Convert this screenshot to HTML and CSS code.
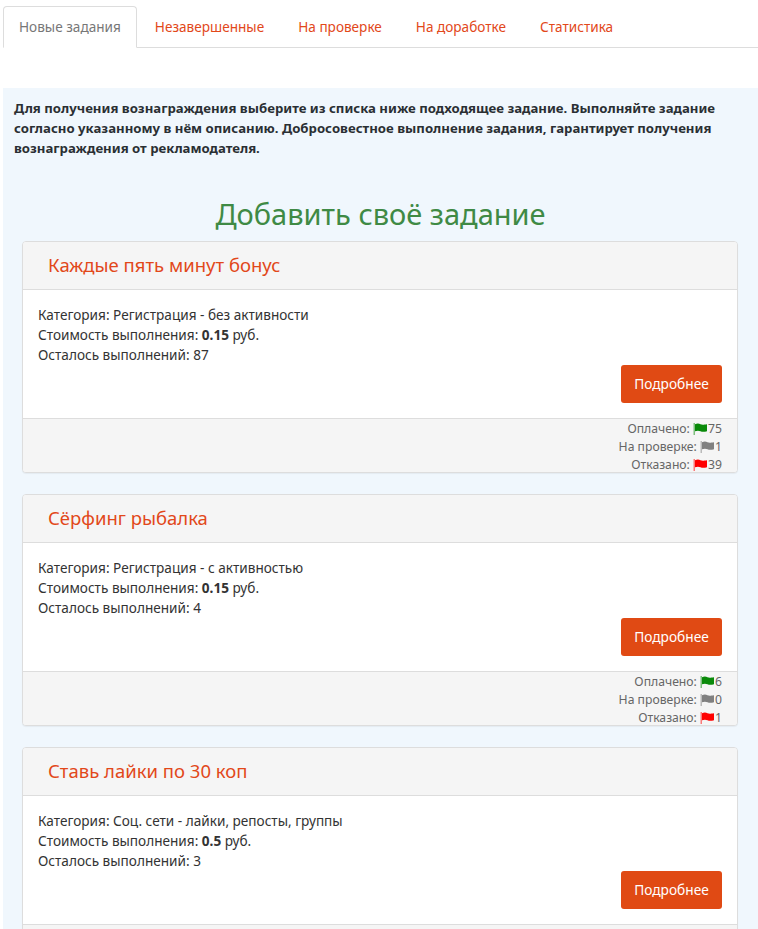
FILE: index.html
```html
<!DOCTYPE html>
<html lang="ru">
<head>
<meta charset="utf-8">
<title>Новые задания</title>
<link rel="stylesheet" href="styles.css">
</head>
<body>
<svg class="defs" width="0" height="0"><defs>
<symbol id="flag" viewBox="0 0 14 12"><path d="M0.500 0h1.500v12h-1.500z" fill="currentColor" opacity=".5"/><path d="M2 1.200c2.400-1 4-.7 5.500 0s3 .6 6.500 0v7c-2.800.7-4.900.7-6.500 0s-3.200-.8-5.500 0z" fill="currentColor"/></symbol>
</defs></svg>
<nav class="tabs">
  <a class="tab active">Новые задания</a>
  <a class="tab">Незавершенные</a>
  <a class="tab">На проверке</a>
  <a class="tab">На доработке</a>
  <a class="tab">Статистика</a>
</nav>
<main class="content">
  <p class="intro">Для получения вознаграждения выберите из списка ниже подходящее задание. Выполняйте задание согласно указанному в нём описанию. Добросовестное выполнение задания, гарантирует получения вознаграждения от рекламодателя.</p>
  <h1 class="add">Добавить своё задание</h1>
  <div class="list">
    <section class="card">
      <h2 class="card-title">Каждые пять минут бонус</h2>
      <div class="card-body">
        <div class="info">Категория: Регистрация - без активности<br>Стоимость выполнения: <b>0.15</b> руб.<br>Осталось выполнений: 87</div>
        <div class="actions"><a class="btn">Подробнее</a></div>
      </div>
      <div class="card-foot">
        <div>Оплачено: <svg class="flag green"><use href="#flag"/></svg>75</div>
        <div>На проверке: <svg class="flag gray"><use href="#flag"/></svg>1</div>
        <div>Отказано: <svg class="flag red"><use href="#flag"/></svg>39</div>
      </div>
    </section>
    <section class="card">
      <h2 class="card-title">Сёрфинг рыбалка</h2>
      <div class="card-body">
        <div class="info">Категория: Регистрация - с активностью<br>Стоимость выполнения: <b>0.15</b> руб.<br>Осталось выполнений: 4</div>
        <div class="actions"><a class="btn">Подробнее</a></div>
      </div>
      <div class="card-foot">
        <div>Оплачено: <svg class="flag green"><use href="#flag"/></svg>6</div>
        <div>На проверке: <svg class="flag gray"><use href="#flag"/></svg>0</div>
        <div>Отказано: <svg class="flag red"><use href="#flag"/></svg>1</div>
      </div>
    </section>
    <section class="card">
      <h2 class="card-title">Ставь лайки по 30 коп</h2>
      <div class="card-body">
        <div class="info">Категория: Соц. сети - лайки, репосты, группы<br>Стоимость выполнения: <b>0.5</b> руб.<br>Осталось выполнений: 3</div>
        <div class="actions"><a class="btn">Подробнее</a></div>
      </div>
      <div class="card-foot"></div>
    </section>
  </div>
</main>
</body>
</html>
```
FILE: styles.css
```css
* { box-sizing: border-box; }
html, body { height: 929px; overflow: hidden; }
body {
  margin: 0;
  padding: 6px 0 0 3px;
  background: #fff;
  color: #333;
  font-family: "Noto Sans", "Open Sans", sans-serif;
  font-size: 13.6px;
  line-height: 20px;
}
.defs { position: absolute; }
.tabs {
  display: flex;
  gap: 2px;
  height: 42px;
  border-bottom: 1px solid #ddd;
}
.tab {
  height: 42px;
  padding: 10px 15px 0;
  color: #e2481a;
  font-size: 13.6px;
  border: 1px solid transparent;
  border-radius: 4px 4px 0 0;
}
.tab.active {
  color: #777;
  background: #fff;
  border-color: #ddd #ddd #fff;
}
.content {
  margin-top: 40px;
  background: #f0f7fd;
  padding: 10px 0 0;
  height: 841px;
  overflow: hidden;
}
.intro {
  margin: 0 22px 0 11px;
  font-weight: 700;
  font-size: 13.2px;
  color: #2a2f33;
}
.add {
  margin: 36px 0 0;
  text-align: center;
  font-weight: 400;
  font-size: 29px;
  line-height: 40px;
  color: #3f8a45;
}
.list {
  display: flex;
  flex-direction: column;
  gap: 21px;
  margin: 7px 20px 0 19px;
}
.card {
  background: #fff;
  border: 1px solid #ddd;
  border-radius: 4px;
  box-shadow: 0 1px 1px rgba(0,0,0,.05);
  overflow: hidden;
}
.card-title {
  margin: 0;
  height: 48px;
  padding: 12px 25px 0;
  background: #f5f5f5;
  border-bottom: 1px solid #ddd;
  color: #e2481a;
  font-weight: 400;
  font-size: 18.5px;
  line-height: 22px;
}
.card-body {
  height: 129px;
  padding: 15px 15px 0;
  border-bottom: 1px solid #ddd;
}
.info { color: #333; }
.actions {
  display: flex;
  justify-content: flex-end;
}
.btn {
  display: block;
  width: 101px;
  height: 38px;
  line-height: 38px;
  text-align: center;
  color: #fff;
  background: #e04a14;
  border-radius: 3px;
  font-size: 13.7px;
}
.card-foot {
  height: 53px;
  padding: 1px 15px 0;
  background: #f5f5f5;
  text-align: right;
  color: #666;
  font-size: 12.2px;
  line-height: 18px;
}
.flag { width: 14px; height: 12px; margin-right: 1px; vertical-align: -2px; }
.green { color: #0a8a0a; }
.gray { color: #808080; }
.red { color: #f00; }
```
